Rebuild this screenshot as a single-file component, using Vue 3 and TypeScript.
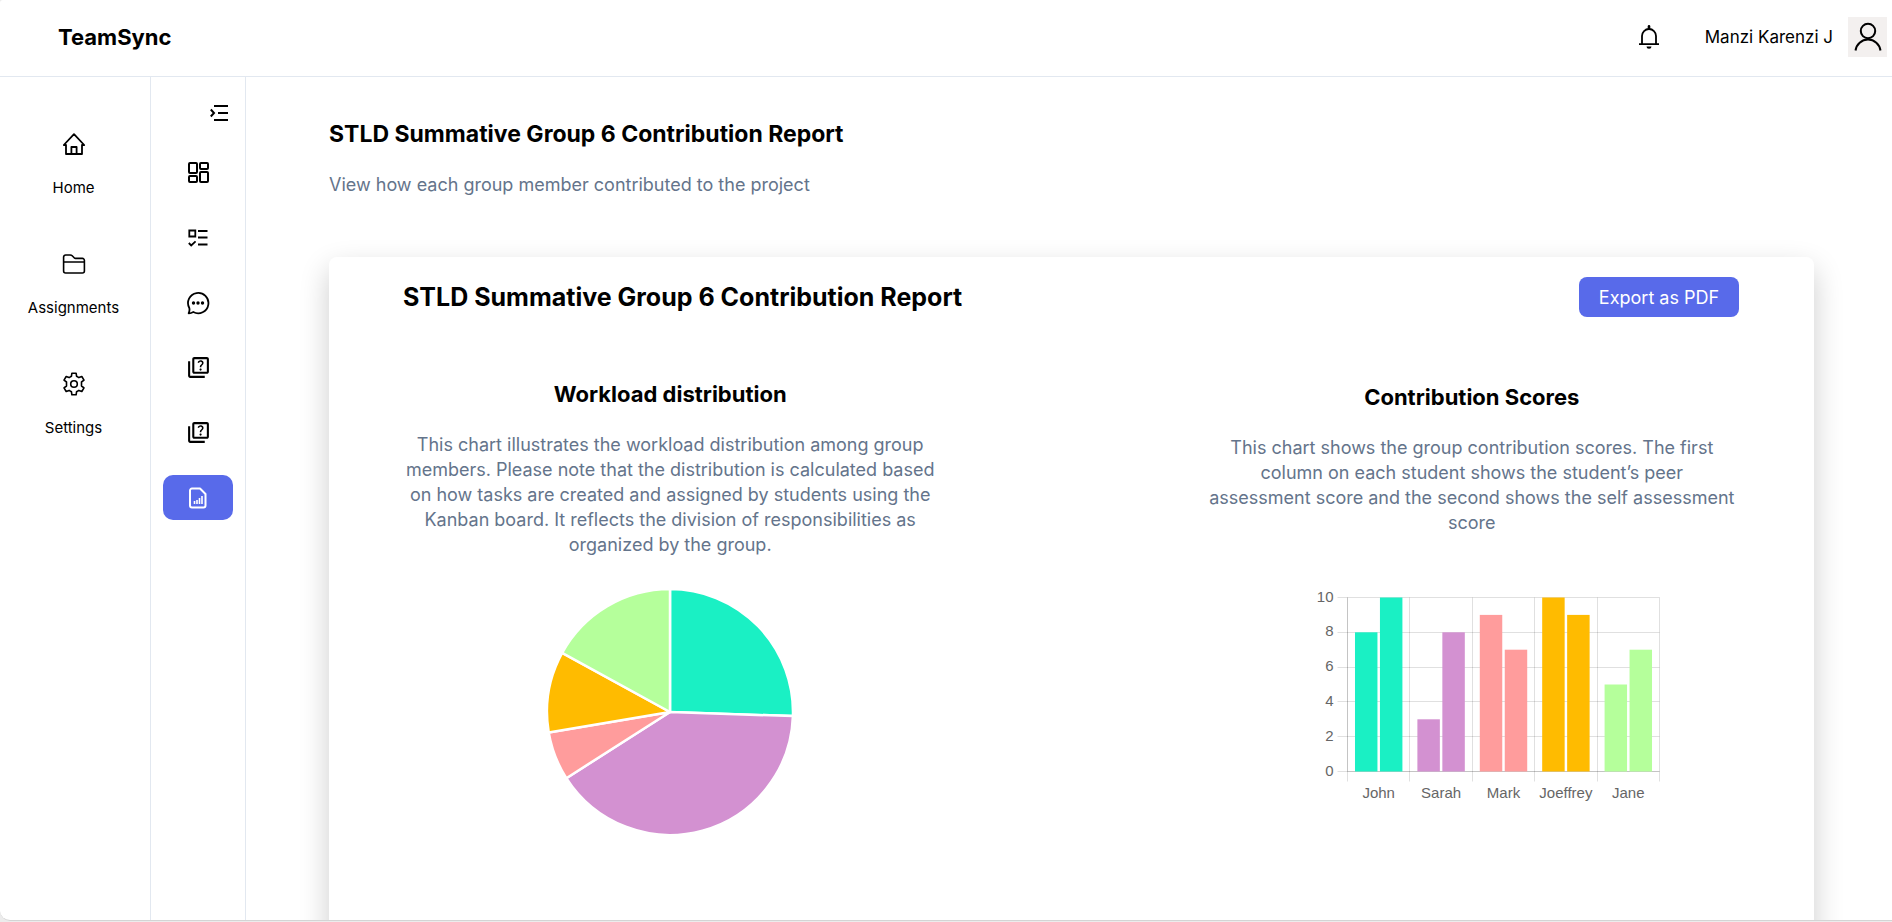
<script setup lang="ts">
interface Slice { name: string; value: number; color: string }
interface Score { name: string; peer: number; self: number; color: string }

const slices: Slice[] = [
  { name: 'John', value: 12, color: '#1af0c4' },
  { name: 'Sarah', value: 19, color: '#d391d1' },
  { name: 'Mark', value: 3, color: '#ff9c9c' },
  { name: 'Joeffrey', value: 5, color: '#ffbb00' },
  { name: 'Jane', value: 8, color: '#b5ff9b' },
]

const scores: Score[] = [
  { name: 'John', peer: 8, self: 10, color: '#1af0c4' },
  { name: 'Sarah', peer: 3, self: 8, color: '#d391d1' },
  { name: 'Mark', peer: 9, self: 7, color: '#ff9c9c' },
  { name: 'Joeffrey', peer: 10, self: 9, color: '#ffbb00' },
  { name: 'Jane', peer: 5, self: 7, color: '#b5ff9b' },
]

// Pie geometry
const radius = 123
const centre = 125
const total = slices.reduce((sum, s) => sum + s.value, 0)
const pointAt = (share: number): string => {
  const angle = share * 2 * Math.PI
  return `${centre + radius * Math.sin(angle)} ${centre - radius * Math.cos(angle)}`
}
let passed = 0
const wedges = slices.map((s) => {
  const from = passed / total
  passed += s.value
  const to = passed / total
  const large = to - from > 0.5 ? 1 : 0
  return { ...s, d: `M${centre} ${centre}L${pointAt(from)}A${radius} ${radius} 0 ${large} 1 ${pointAt(to)}Z` }
})

// Bar chart geometry
const plot = { left: 67.5, top: 12.5, width: 312, height: 174 }
const bottom = plot.top + plot.height
const step = plot.width / scores.length
const cell = step * 0.4
const barWidth = cell * 0.9
const ticks = [0, 2, 4, 6, 8, 10]
const yOf = (v: number): number => bottom - (v / 10) * plot.height
const lineY = (v: number): number => Math.floor(yOf(v)) + 0.5
const lineX = (i: number): number => Math.floor(plot.left + i * step) + 0.5
const bars = scores.flatMap((s, i) =>
  [s.peer, s.self].map((v, k) => ({
    key: s.name + k,
    x: plot.left + i * step + step * 0.1 + cell * k + cell * 0.05,
    y: yOf(v),
    h: bottom - yOf(v),
    color: s.color,
  })),
)
</script>

<template>
  <div class="backdrop">
    <div class="window">
      <header class="topbar">
        <a class="brand" href="#">TeamSync</a>
        <div class="account">
          <button class="plain" type="button" aria-label="Notifications">
            <svg width="22" height="24" viewBox="0 0 22 24" fill="none" stroke="#000" stroke-width="1.8">
              <path d="M4 19V11a7 7 0 0 1 14 0v8M1 19.2h20" />
              <path d="M11 1.4v2" stroke-width="2.6" stroke-linecap="round" />
              <path d="M8.5 21.5h5a2.5 2.3 0 0 1-5 0z" fill="#000" stroke="none" />
            </svg>
          </button>
          <span class="user">Manzi Karenzi J</span>
          <svg class="avatar" width="39" height="40" viewBox="0 0 39 40" fill="none" stroke="#000" stroke-width="2">
            <circle cx="20" cy="14" r="7.2" />
            <path d="M7.5 33.5a12.6 12.6 0 0 1 25 0" />
          </svg>
        </div>
      </header>

      <div class="body">
        <nav class="primary" aria-label="Main">
          <a href="#">
            <svg width="24" height="24" viewBox="0 0 24 24" fill="none" stroke="#000" stroke-width="1.8" stroke-linejoin="round" stroke-linecap="round">
              <path d="M1.8 13 12 2.2 22.2 13H20v9H4v-9z" /><path d="M9.4 22v-7h5.2v7" />
            </svg>
            <span>Home</span>
          </a>
          <a href="#">
            <svg width="24" height="24" viewBox="0 0 24 24" fill="none" stroke="#000" stroke-width="1.6" stroke-linejoin="round">
              <path d="M1.6 9.6V5a2 2 0 0 1 2-2h4.6c.8 0 1.500.3 2 .8l2.2 2.2c.3.3.6.4 1 .4h7a2 2 0 0 1 2 2V19a2 2 0 0 1-2 2H3.600a2 2 0 0 1-2-2zM1.600 10h20.800" />
            </svg>
            <span>Assignments</span>
          </a>
          <a href="#">
            <svg width="24" height="24" viewBox="0 0 24 24" fill="none" stroke="#000" stroke-width="1.6" stroke-linejoin="round" stroke-linecap="round">
              <path d="M9.400 4.300 9.900 1.200h4.200l.5 3.100 2.300 1.300 2.900-1.100 2.200 3.600-2.500 1.900v4l2.500 1.900-2.200 3.600-2.900-1.100-2.300 1.300-.5 3.100H9.900l-.5-3.100-2.300-1.300-2.900 1.100L2 15.900 4.500 14v-4L2 8.100l2.200-3.600 2.900 1.100z" />
              <circle cx="12" cy="12" r="3.300" />
            </svg>
            <span>Settings</span>
          </a>
        </nav>

        <nav class="secondary" aria-label="Project">
          <button class="plain toggle" type="button" aria-label="Expand menu">
            <svg width="18" height="16" viewBox="0 0 18 16" fill="none" stroke="#000" stroke-width="2">
              <path d="M4 1h14M8 8h10M4 15h14M.8 4.500 4 8 .8 11.500" />
            </svg>
          </button>
          <a href="#" aria-label="Dashboard">
            <svg width="21" height="21" viewBox="0 0 21 21" fill="none" stroke="#000" stroke-width="2">
              <rect x="1" y="1" width="8" height="10" rx="1" /><rect x="12" y="1" width="8" height="6" rx="1" />
              <rect x="1" y="14" width="8" height="6" rx="1" /><rect x="12" y="10" width="8" height="10" rx="1" />
            </svg>
          </a>
          <a href="#" aria-label="Tasks">
            <svg width="20" height="20" viewBox="0 0 20 20" fill="none" stroke="#000" stroke-width="1.8">
              <path d="M1.300 2.500h6v6h-6zM10 3h9.500M10 9.500h9.500M10 16.500h9.500M.8 15l2.400 2.400 4.400-4" />
            </svg>
          </a>
          <a href="#" aria-label="Chat">
            <svg width="24" height="24" viewBox="0 0 24 24" fill="none" stroke="#000" stroke-width="1.8" stroke-linejoin="round">
              <path d="M3.300 17A10.200 10.200 0 1 1 7.300 21c-1.500.9-3 1.400-4.700 1.300C3.500 20.500 3.800 19 3.300 17z" />
              <g fill="#000" stroke="none"><circle cx="7.500" cy="12" r="1.700" /><circle cx="12" cy="12" r="1.700" /><circle cx="16.500" cy="12" r="1.700" /></g>
            </svg>
          </a>
          <a v-for="n in 2" :key="n" href="#" :aria-label="n === 1 ? 'Peer assessment' : 'Self assessment'">
            <svg width="25" height="25" viewBox="0 0 24 24">
              <path d="M4 6H2v14c0 1.100.9 2 2 2h14v-2H4V6zM20 2H8c-1.100 0-2 .9-2 2v12c0 1.100.9 2 2 2h12c1.100 0 2-.9 2-2V4c0-1.100-.9-2-2-2zm0 14H8V4h12v12z" />
              <path d="M13.510 10.160c.41-.73 1.180-1.160 1.630-1.800.48-.68.21-1.940-1.140-1.940-.88 0-1.320.67-1.500 1.230l-1.370-.57C11.510 5.960 12.520 5 13.990 5c1.230 0 2.080.56 2.510 1.260.37.6.58 1.730.01 2.570-.63.93-1.230 1.210-1.560 1.810-.13.24-.18.4-.18 1.180h-1.520c.01-.41-.06-1.080.27-1.660zM12.950 13.950c0-.59.47-1.040 1.050-1.040.59 0 1.040.45 1.040 1.040 0 .58-.44 1.050-1.040 1.050-.58 0-1.050-.47-1.050-1.050z" />
            </svg>
          </a>
          <a class="active" href="#" aria-label="Report" aria-current="page">
            <svg width="18" height="22" viewBox="0 0 18 22" fill="none" stroke="#fff" stroke-width="2" stroke-linejoin="round">
              <path d="M3 1.500h8L16.500 7v11.500a2 2 0 0 1-2 2H3a2 2 0 0 1-2-2v-15a2 2 0 0 1 2-2z" />
              <path d="M5.500 17v-3M8 17v-4M10.500 17v-6M13 17V9" stroke-width="1.600" />
            </svg>
          </a>
        </nav>

        <main>
          <h1>STLD Summative Group 6 Contribution Report</h1>
          <p class="intro">View how each group member contributed to the project</p>

          <section class="card">
            <div class="card-head">
              <h2>STLD Summative Group 6 Contribution Report</h2>
              <button class="export" type="button">Export as PDF</button>
            </div>
            <div class="charts">
              <article>
                <h3>Workload distribution</h3>
                <p>
                  This chart illustrates the workload distribution among group<br />
                  members. Please note that the distribution is calculated based<br />
                  on how tasks are created and assigned by students using the<br />
                  Kanban board. It reflects the division of responsibilities as<br />
                  organized by the group.
                </p>
                <svg class="pie" width="250" height="250" viewBox="0 0 250 250" role="img" aria-label="Workload distribution">
                  <path v-for="w in wedges" :key="w.name" :d="w.d" :fill="w.color" stroke="#fff" stroke-width="2.500" stroke-linejoin="round" />
                </svg>
              </article>
              <article class="scores">
                <h3>Contribution Scores</h3>
                <p>
                  This chart shows the group contribution scores. The first<br />
                  column on each student shows the student’s peer<br />
                  assessment score and the second shows the self assessment<br />
                  score
                </p>
                <svg class="bars" width="384" height="220" viewBox="0 0 384 220" role="img" aria-label="Contribution scores">
                  <g stroke="#000" stroke-opacity="0.12">
                    <line v-for="t in ticks" :key="t" :x1="plot.left - 10" :x2="plot.left + plot.width" :y1="lineY(t)" :y2="lineY(t)" />
                    <line v-for="i in 6" :key="i" :x1="lineX(i - 1)" :x2="lineX(i - 1)" :y1="plot.top" :y2="bottom + 10" />
                    <path :d="`M${plot.left} ${plot.top}V${bottom}H${plot.left + plot.width}`" fill="none" />
                  </g>
                  <rect v-for="b in bars" :key="b.key" :x="b.x" :y="b.y" :width="barWidth" :height="b.h" :fill="b.color" />
                  <g class="axis">
                    <text v-for="t in ticks" :key="t" :x="plot.left - 14" :y="yOf(t) + 4" text-anchor="end">{{ t }}</text>
                    <text v-for="(s, i) in scores" :key="s.name" :x="plot.left + (i + 0.5) * step" :y="bottom + 26" text-anchor="middle">{{ s.name }}</text>
                  </g>
                </svg>
              </article>
            </div>
          </section>
        </main>
      </div>
    </div>
  </div>
</template>

<style>
html, body { margin: 0; height: 100%; }
#app { height: 100%; }
</style>

<style scoped>
.backdrop {
  height: 100vh;
  box-sizing: border-box;
  padding-bottom: 1px;
  background: #ececec;
  font-family: Inter, "Open Sans", sans-serif;
  color: #000;
}
.window {
  display: flex;
  flex-direction: column;
  height: 100%;
  box-sizing: border-box;
  overflow: hidden;
  background: #fff;
  border-bottom: 1px solid #d4d4d4;
  border-radius: 3px 0 0 10px;
}
a { color: inherit; text-decoration: none; }
svg { display: block; }
.plain { padding: 0; border: 0; background: none; cursor: pointer; }
.topbar {
  display: flex;
  flex: none;
  align-items: center;
  justify-content: space-between;
  height: 77px;
  padding: 0 5px 3px 58px;
  box-sizing: border-box;
  border-bottom: 1px solid #e2e8f0;
}
.brand { font-size: 22px; font-weight: 700; }
.account { display: flex; align-items: center; }
.user { margin: 0 15px 0 45px; font-size: 17px; }
.avatar { background: #f3f0ef; }
.body { display: flex; flex: 1; min-height: 0; }
.primary {
  display: flex;
  flex: none;
  flex-direction: column;
  gap: 54px;
  width: 151px;
  padding: 55px 3px 0 0;
  box-sizing: border-box;
  border-right: 1px solid #e2e8f0;
}
.primary a {
  display: flex;
  flex-direction: column;
  align-items: center;
  justify-content: space-between;
  height: 66px;
  font-size: 15px;
}
.primary span { line-height: 20px; }
.secondary {
  display: flex;
  flex: none;
  flex-direction: column;
  align-items: center;
  gap: 20px;
  width: 95px;
  padding-top: 28px;
  box-sizing: border-box;
  border-right: 1px solid #e2e8f0;
}
.secondary a {
  display: flex;
  align-items: center;
  justify-content: center;
  width: 70px;
  height: 45px;
  border-radius: 10px;
}
.secondary .active { background: #586aea; }
.toggle { align-self: flex-end; margin: 0 17px 9px 0; }
main { flex: 1; min-width: 0; padding: 43px 78px 0 83px; overflow: hidden; }
h1, h2, h3, p { margin: 0; }
h1 { font-size: 23px; line-height: 28px; }
.intro { margin-top: 24px; font-size: 18px; line-height: 25px; color: #64748b; }
.card {
  min-height: 800px;
  margin-top: 60px;
  padding: 20px 75px 0 74px;
  border-radius: 8px;
  box-shadow: 0 12px 30px rgba(0, 0, 0, 0.2);
}
.card-head { display: flex; align-items: center; justify-content: space-between; }
h2 { font-size: 25px; line-height: 32px; }
.export {
  width: 160px;
  height: 40px;
  padding: 0;
  border: 0;
  border-radius: 8px;
  background: #586aea;
  color: #fff;
  font: inherit;
  font-size: 18px;
}
.charts { display: flex; justify-content: space-between; margin-top: 63px; }
article { display: flex; flex-direction: column; align-items: center; width: 40%; text-align: center; }
h3 { font-size: 22px; line-height: 28px; }
article p { margin-top: 24px; font-size: 18px; line-height: 25px; color: #64748b; white-space: nowrap; }
.pie { margin-top: 30px; }
.scores { padding-top: 3px; }
.bars { margin-top: 50px; }
.axis { font: 15px "Liberation Sans", Arial, sans-serif; fill: #666; }
</style>
